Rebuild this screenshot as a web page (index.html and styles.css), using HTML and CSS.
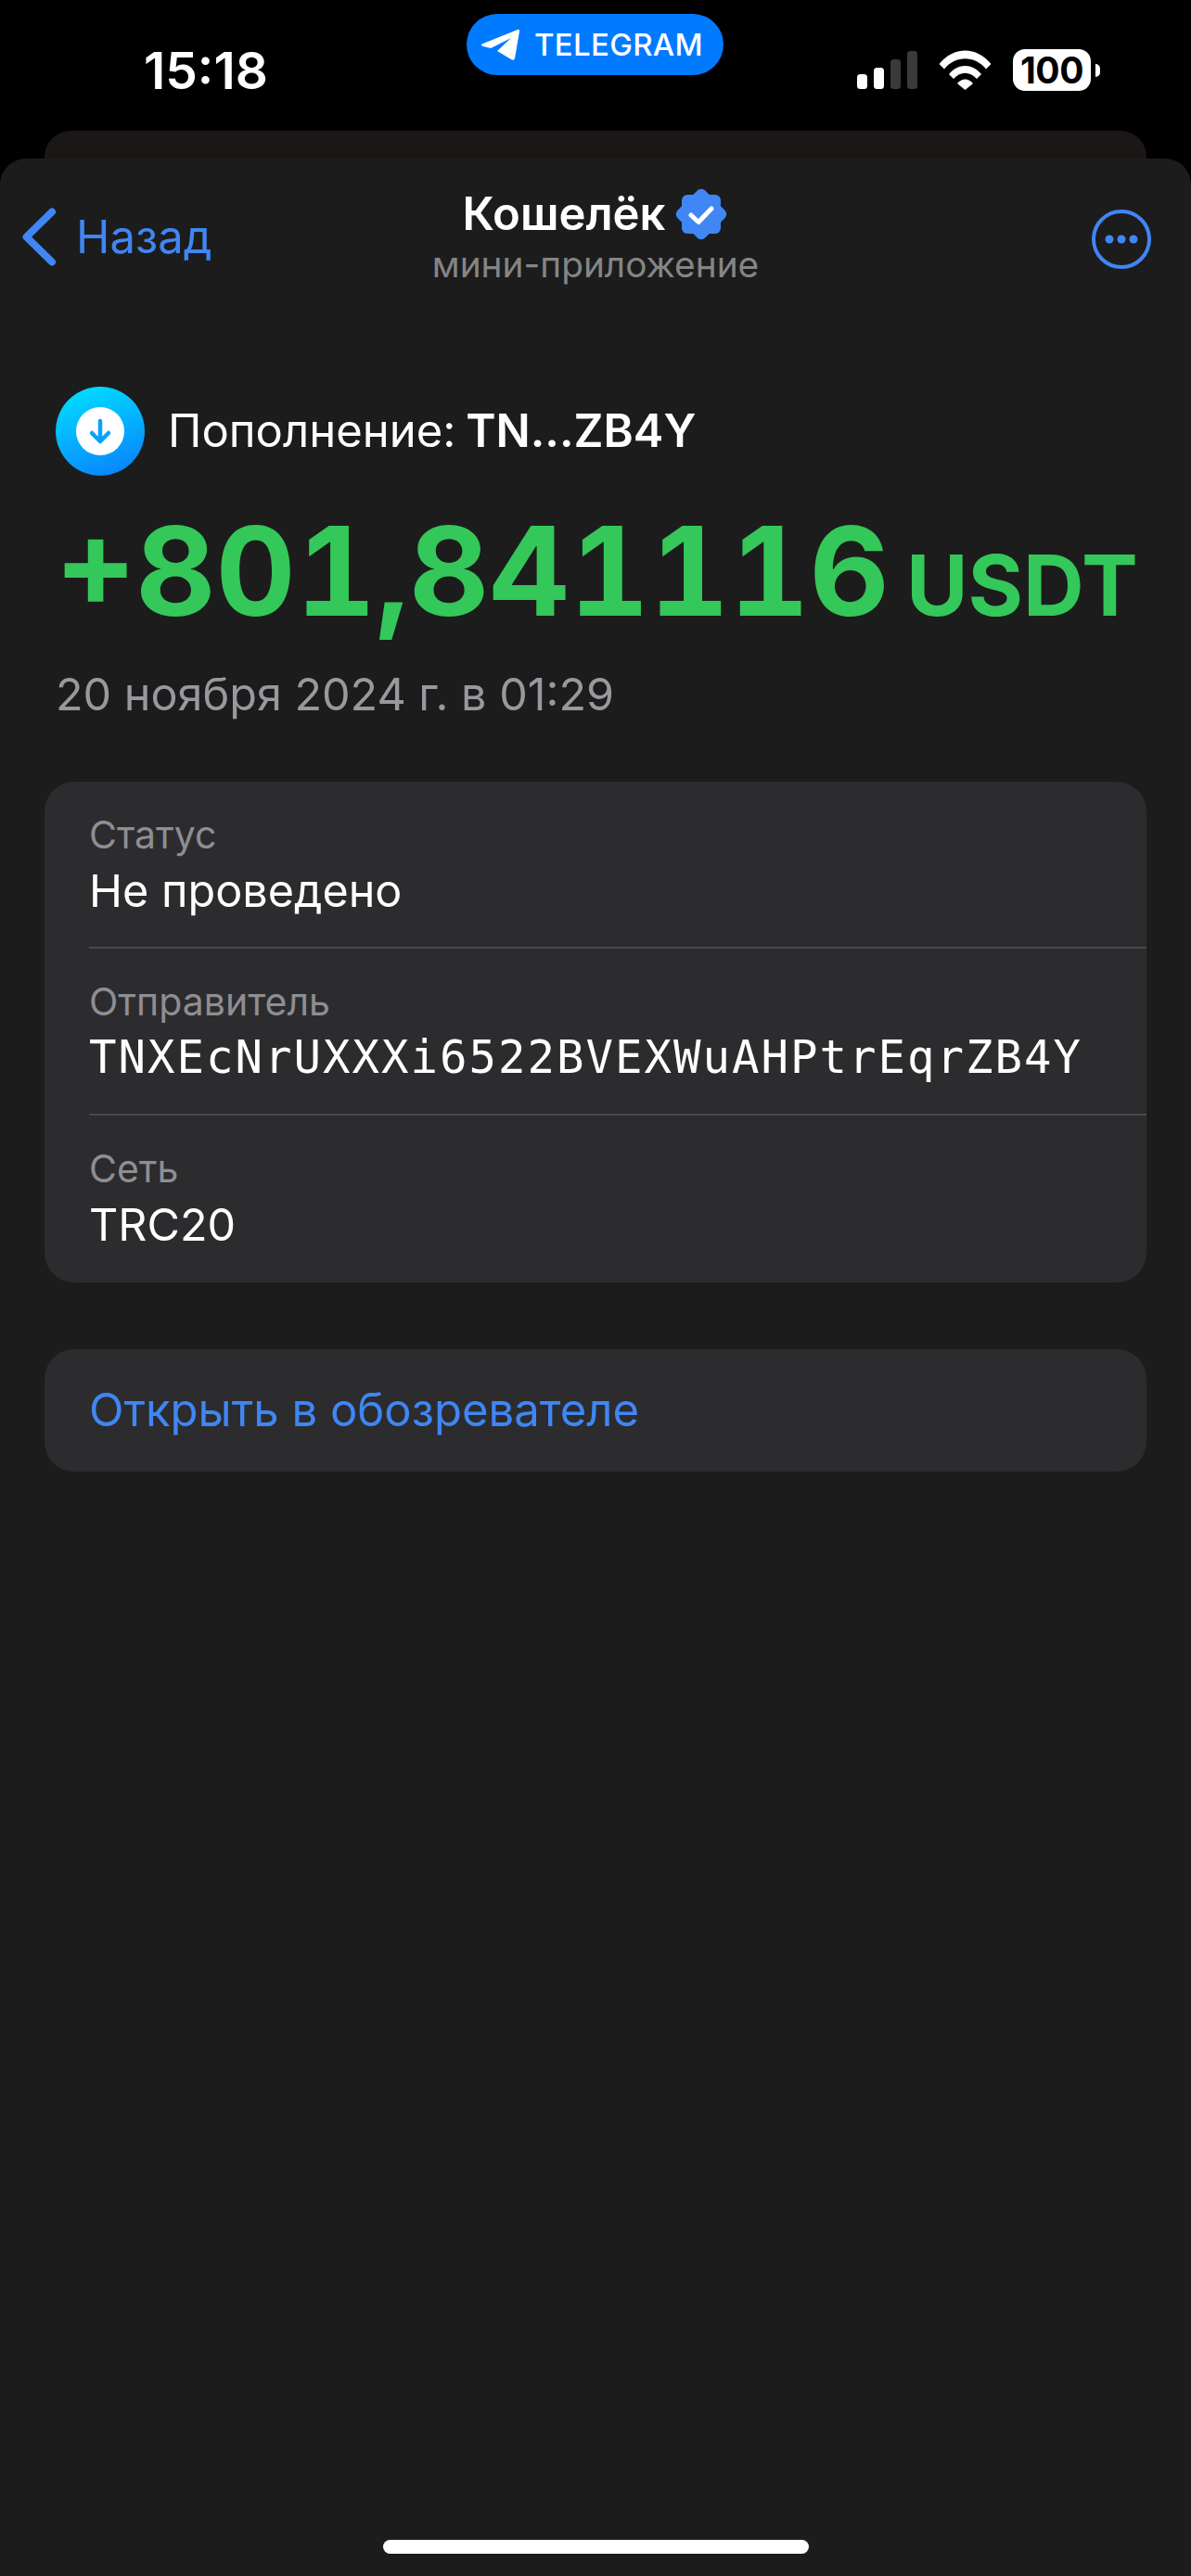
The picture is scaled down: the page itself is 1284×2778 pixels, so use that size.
FILE: index.html
```html
<!DOCTYPE html>
<html lang="ru">
<head>
<meta charset="utf-8">
<title>Кошелёк</title>
<link rel="stylesheet" href="styles.css">
</head>
<body>
<div class="status">
  <span class="time">15:18</span>
  <div class="pill">
    <svg class="plane" viewBox="0 0 43 35"><path d="M1.500 16.500 L40 1 Q42.500 0.300 42 3 L37 32 Q36 35 33 33 L18 24 L33 10 L11 21 L3 19 Q0 18 1.500 16.500 Z" fill="#fff"/></svg>
    <span class="pill-text">TELEGRAM</span>
  </div>
  <div class="indicators">
    <svg class="signal" viewBox="0 0 65 41">
      <rect x="0" y="25" width="11" height="16" rx="3.500" fill="#fff"/>
      <rect x="18" y="18" width="11" height="23" rx="3.500" fill="#fff"/>
      <rect x="36" y="9" width="11" height="32" rx="3.500" fill="#3a3a3a"/>
      <rect x="54" y="0" width="11" height="41" rx="3.500" fill="#3a3a3a"/>
    </svg>
    <svg class="wifi" viewBox="0 0 57 43">
      <path fill="#fff" d="M0.500 15 C16 -4.500 41 -4.500 56.500 15 L51 20.500 C39 5.500 18 5.500 6 20.500 Z"/>
      <path fill="#fff" d="M11 26 C21 14 36 14 46 26 L41 31 C33 22.500 24 22.500 16 31 Z"/>
      <path fill="#fff" d="M20 36 C25 30 32 30 37 36 L28.500 43 Z"/>
    </svg>
    <div class="battery"><span class="battery-level">100</span></div>
    <span class="battery-nub"></span>
  </div>
</div>
<div class="back-card"></div>
<main class="sheet">
  <nav class="nav">
    <div class="back">
      <svg class="chevron" viewBox="0 0 37 63"><path d="M32 4.500 L4.500 31.500 L32 58.500" fill="none" stroke="#4086f4" stroke-width="8" stroke-linecap="round" stroke-linejoin="round"/></svg>
      <span class="back-text">Назад</span>
    </div>
    <div class="title-block">
      <div class="title-row">
        <span class="title">Кошелёк</span>
        <svg class="badge" viewBox="0 0 58 58">
          <rect x="8" y="8" width="42" height="42" rx="6" fill="#4086f4"/>
          <rect x="8" y="8" width="42" height="42" rx="6" fill="#4086f4" transform="rotate(45 29 29)"/>
          <path d="M18 30 L26 37.500 L40 23" fill="none" stroke="#fff" stroke-width="5" stroke-linecap="round" stroke-linejoin="round"/>
        </svg>
      </div>
      <div class="subtitle">мини-приложение</div>
    </div>
    <svg class="more" viewBox="0 0 64 64">
      <circle cx="32" cy="32" r="30" fill="none" stroke="#4086f4" stroke-width="4"/>
      <circle cx="19" cy="32" r="4.500" fill="#4086f4"/>
      <circle cx="32" cy="32" r="4.500" fill="#4086f4"/>
      <circle cx="45" cy="32" r="4.500" fill="#4086f4"/>
    </svg>
  </nav>
  <section class="summary">
    <div class="tx-head">
      <span class="tx-icon">
        <svg class="tx-arrow" viewBox="0 0 52 52">
          <circle cx="26" cy="26" r="26" fill="#fff"/>
          <path d="M26 15 L26 37 M17 28 L26 37 L35 28" fill="none" stroke="#0aa2fb" stroke-width="4.500" stroke-linecap="round" stroke-linejoin="round"/>
        </svg>
      </span>
      <span class="tx-title">Пополнение: <b class="tx-addr">TN...ZB4Y</b></span>
    </div>
    <div class="amount"><span class="amount-num">+801,841116</span><span class="amount-cur">USDT</span></div>
    <div class="date">20 ноября 2024 г. в 01:29</div>
  </section>
  <section class="card details">
    <div class="row">
      <div class="label">Статус</div>
      <div class="value">Не проведено</div>
    </div>
    <div class="row">
      <div class="label">Отправитель</div>
      <div class="value mono">TNXEcNrUXXXi6522BVEXWuAHPtrEqrZB4Y</div>
    </div>
    <div class="row">
      <div class="label">Сеть</div>
      <div class="value">TRC20</div>
    </div>
  </section>
  <section class="card link-card">
    <span class="link">Открыть в обозревателе</span>
  </section>
  <div class="home-bar"></div>
</main>
</body>
</html>
```
FILE: styles.css
```css
* { box-sizing: border-box; }
html, body { margin: 0; padding: 0; }
body {
  width: 1284px;
  height: 2778px;
  background: #000;
  font-family: Inter, Roboto, "Noto Sans", sans-serif;
  color: #fff;
  display: flex;
  flex-direction: column;
  overflow: hidden;
}
.status {
  height: 141px;
  flex: none;
  padding-left: 155px;
  padding-right: 98px;
  display: flex;
  align-items: flex-start;
  justify-content: space-between;
  position: relative;
}
.time {
  margin-top: 46px;
  font-size: 55px;
  line-height: 60px;
  font-weight: 600;
}
.pill {
  position: absolute;
  left: 503px;
  top: 15px;
  width: 277px;
  height: 66px;
  border-radius: 33px;
  background: #007aff;
  display: flex;
  align-items: center;
  padding-left: 15px;
}
.plane { width: 43px; height: 35px; margin-right: 15px; flex: none; }
.pill-text { font-size: 33px; font-weight: 500; letter-spacing: 0.3px; line-height: 40px; }
.indicators { display: flex; align-items: flex-start; margin-top: 53px; }
.signal { width: 65px; height: 41px; margin-top: 2px; margin-right: 23px; }
.wifi { width: 57px; height: 43px; margin-top: 1px; margin-right: 23px; }
.battery {
  width: 84px;
  height: 45px;
  border-radius: 13px;
  background: #fff;
  display: flex;
  align-items: center;
  justify-content: center;
}
.battery-level { color: #000; font-size: 39px; font-weight: 700; line-height: 45px; letter-spacing: -0.5px; }
.battery-nub {
  width: 5px;
  height: 14px;
  margin: 16px 0 0 5px;
  background: #fff;
  border-radius: 0 7px 7px 0;
}
.back-card {
  height: 30px;
  flex: none;
  margin: 0 48px;
  background: #1a1716;
  border-radius: 28px 28px 0 0;
}
.sheet {
  flex: 1;
  background: #1c1c1c;
  border-radius: 28px 28px 0 0;
  display: flex;
  flex-direction: column;
}
.nav {
  height: 170px;
  flex: none;
  padding: 31px 24px 0;
  display: grid;
  grid-template-columns: 1fr auto 1fr;
  align-items: start;
}
.back { display: flex; align-items: center; margin-top: 22px; }
.chevron { width: 37px; height: 63px; margin-right: 21px; flex: none; }
.back-text { font-size: 49px; line-height: 63px; color: #4086f4; }
.title-block { display: flex; flex-direction: column; align-items: center; }
.title-row { display: flex; align-items: center; height: 58px; }
.title { font-size: 49px; font-weight: 600; line-height: 58px; }
.badge { width: 58px; height: 58px; margin-left: 10px; flex: none; }
.subtitle { font-size: 38.800px; line-height: 46px; color: #858585; margin-top: 2px; }
.more { width: 64px; height: 64px; justify-self: end; margin-top: 24px; margin-right: 19px; }
.summary { padding: 76px 0 0 60px; flex: none; }
.tx-head { display: flex; align-items: center; height: 96px; }
.tx-icon {
  width: 96px;
  height: 96px;
  border-radius: 50%;
  background: linear-gradient(160deg, #00e5ff 0%, #0a7bff 100%);
  display: flex;
  align-items: center;
  justify-content: center;
  flex: none;
}
.tx-arrow { width: 52px; height: 52px; }
.tx-title { margin-left: 25px; font-size: 49px; line-height: 60px; }
.tx-addr { font-weight: 600; margin-left: -3px; }
.amount {
  display: flex;
  align-items: baseline;
  margin-top: 38px;
  color: #34c759;
  font-weight: 700;
  line-height: 130px;
}
.amount-num { font-size: 133.500px; font-variant-numeric: tabular-nums; }
.amount-cur { font-size: 91px; margin-left: 18px; }
.date { margin-top: 24px; font-size: 48.5px; line-height: 58px; color: #98989e; }
.card {
  margin: 0 48px;
  background: #2c2c2e;
  border-radius: 32px;
  flex: none;
}
.details { margin-top: 65px; height: 540px; padding-left: 48px; }
.row { height: 180px; padding: 31px 0 0; border-bottom: 2px solid #48484a; }
.row:last-child { border-bottom: 0; }
.label { font-size: 41px; line-height: 52px; color: #8e8e93; }
.value { font-size: 48.500px; line-height: 62px; margin-top: 4px; }
.mono { font-family: "DejaVu Sans Mono", "Liberation Mono", monospace; font-size: 49px; letter-spacing: 2px; }
.link-card { margin-top: 72px; height: 132px; padding-left: 48px; display: flex; align-items: center; }
.link { font-size: 49px; line-height: 60px; color: #4086f4; }
.home-bar {
  margin: auto auto 24px;
  width: 459px;
  height: 15px;
  border-radius: 8px;
  background: #fff;
}
```
